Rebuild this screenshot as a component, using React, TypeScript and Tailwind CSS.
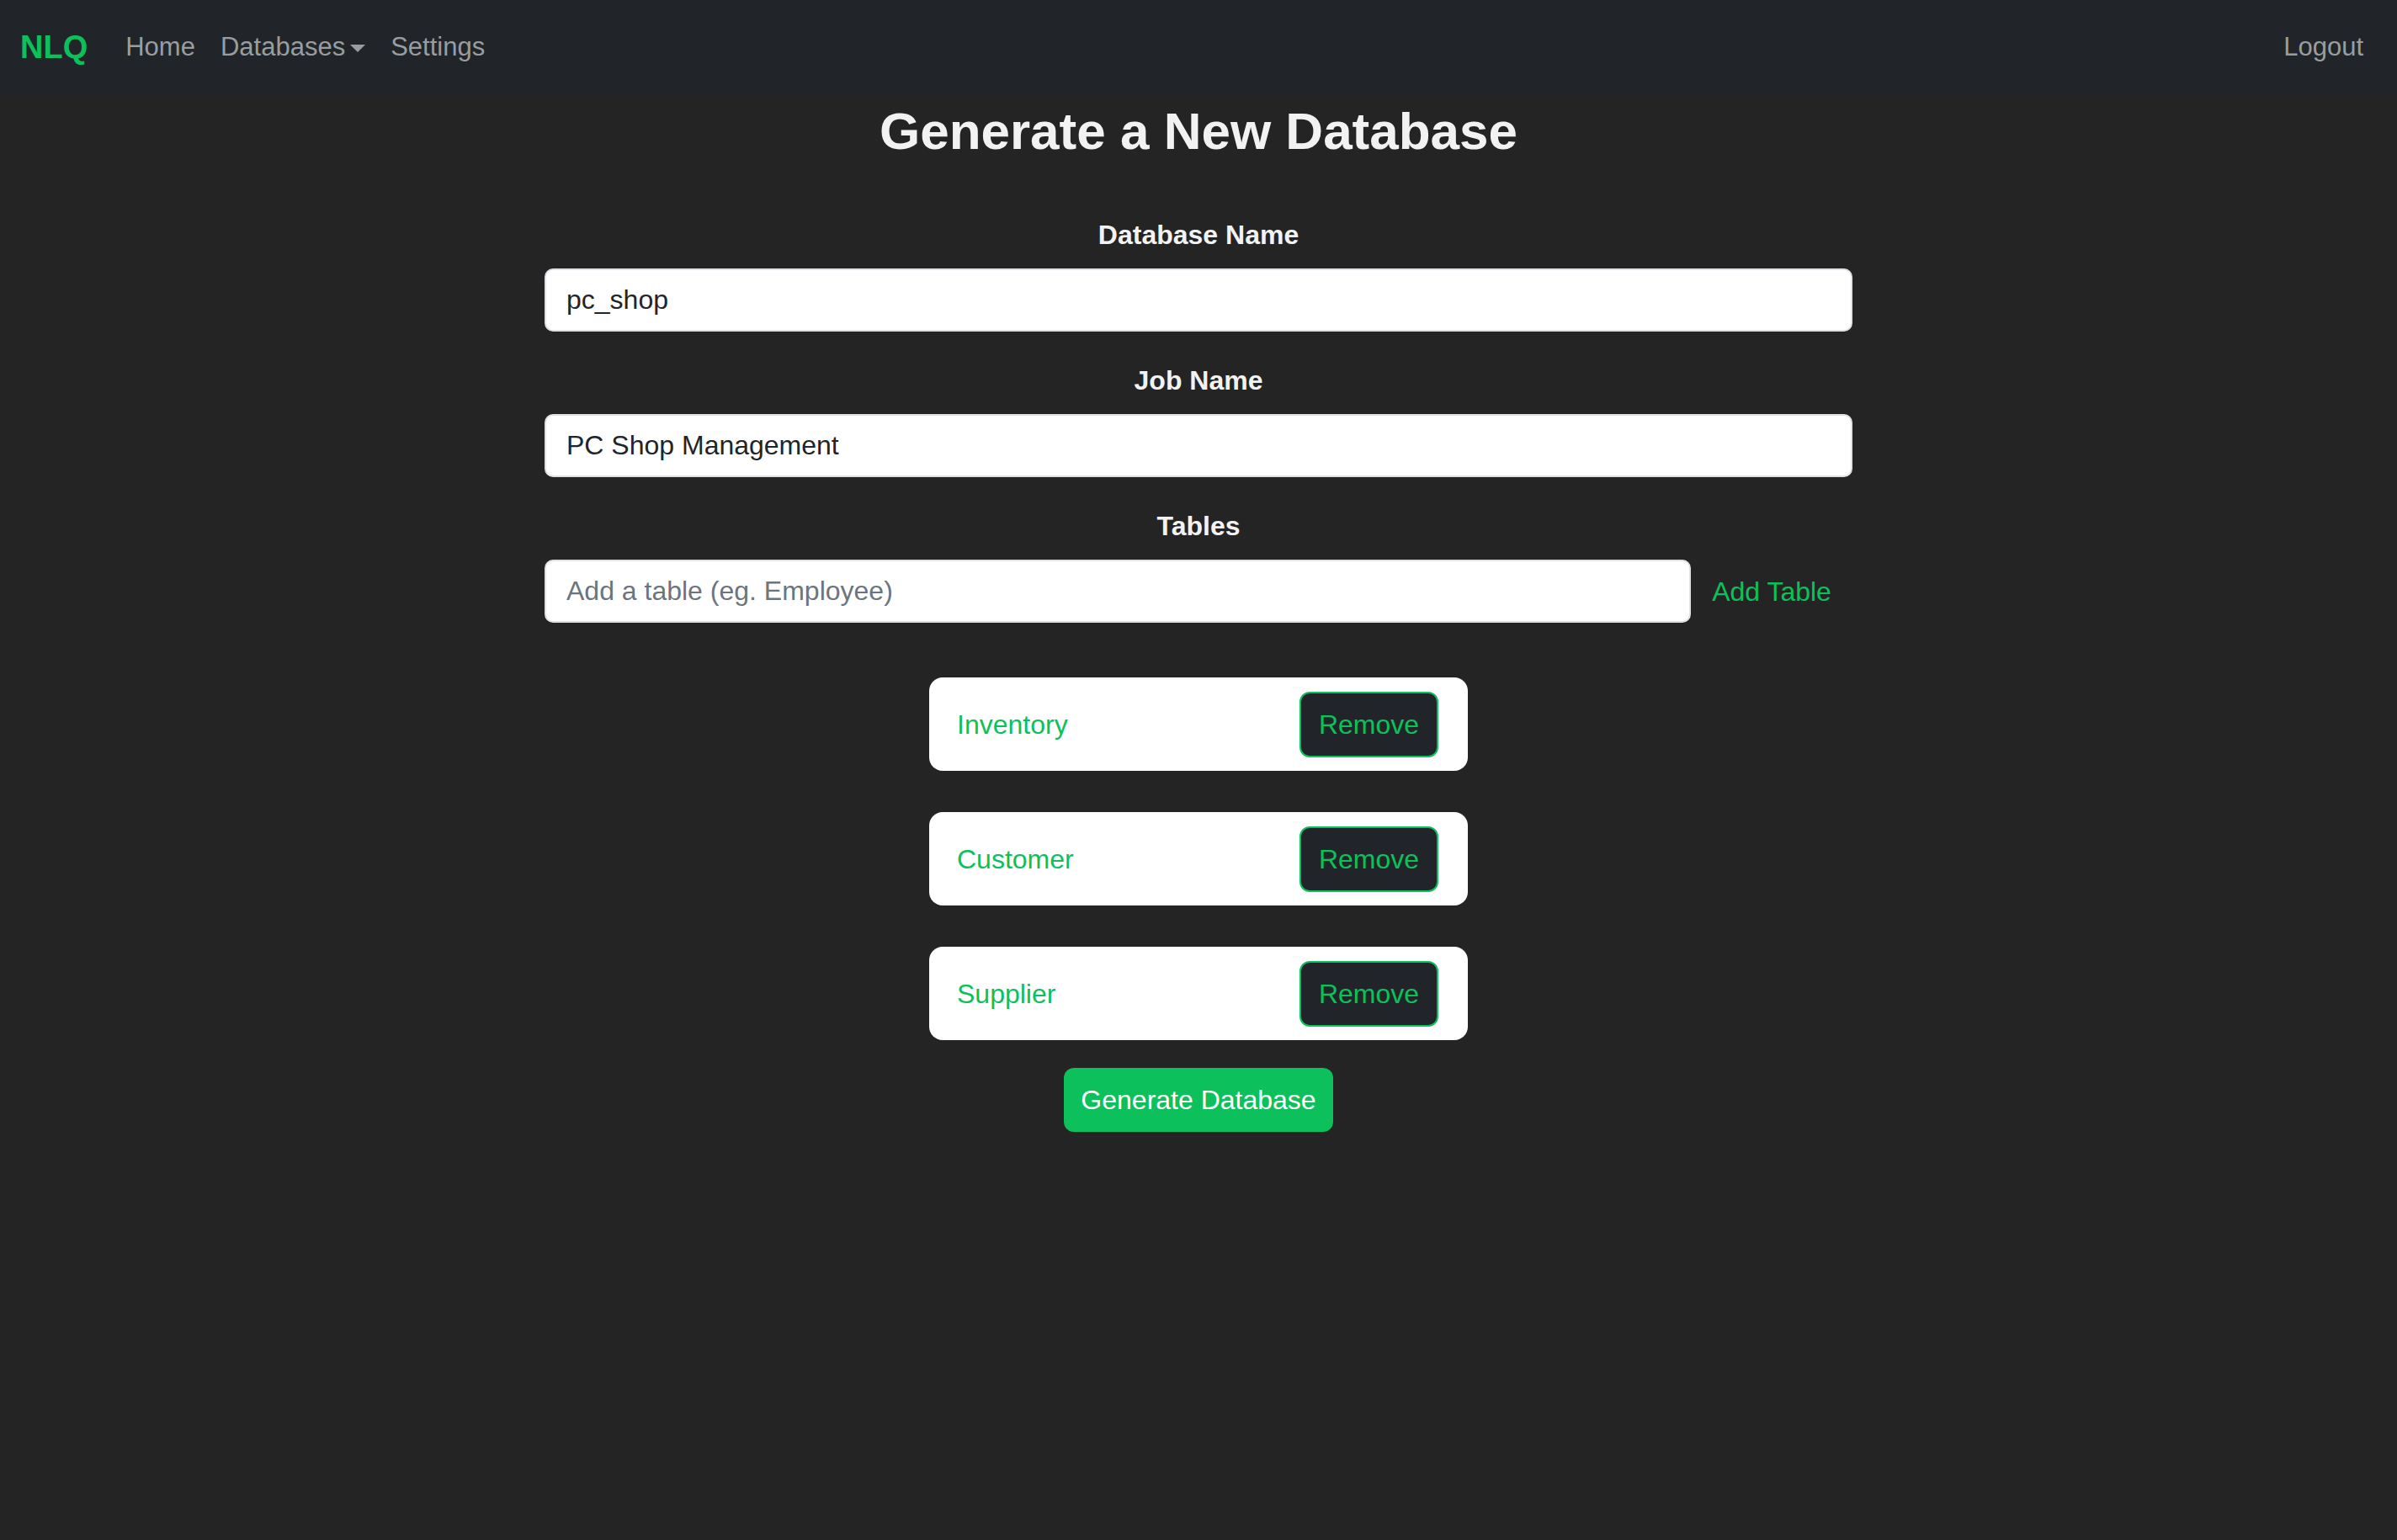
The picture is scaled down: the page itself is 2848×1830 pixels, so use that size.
import { useState } from "react";

const FONT = { fontFamily: '"Segoe UI", "Liberation Sans", Arial, sans-serif' };

export default function App() {
  const [tables, setTables] = useState(["Inventory", "Customer", "Supplier"]);
  const [newTable, setNewTable] = useState("");

  return (
    <div className="min-h-[1830px] bg-[#242424] text-[32px]" style={FONT}>
      {/* navbar */}
      <nav className="flex h-[113px] items-center justify-between bg-[#212529] px-[24px]">
        <div className="flex items-center">
          <span className="mr-[30px] text-[38px] font-bold text-[#0cc15b]">NLQ</span>
          <a className="px-[15px] text-[31px] text-[#9a9da0]">Home</a>
          <a className="flex items-center px-[15px] text-[31px] text-[#9a9da0]">
            Databases
            <span className="ml-[6px] mt-[2px] h-0 w-0 border-x-[9px] border-t-[9px] border-x-transparent border-t-[#9a9da0]" />
          </a>
          <a className="px-[15px] text-[31px] text-[#9a9da0]">Settings</a>
        </div>
        <a className="px-[16px] text-[31px] text-[#9a9da0]">Logout</a>
      </nav>

      <main className="flex flex-col items-center">
        <h1 className="mt-[4px] text-[62px] leading-[77px] font-semibold text-[#f2f2f2]">
          Generate a New Database
        </h1>

        <div className="mt-[61px] flex w-[1554px] flex-col">
          <label className="mb-[16px] text-center leading-[48px] font-bold text-[#f2f2f2]">Database Name</label>
          <input
            defaultValue="pc_shop"
            className="h-[75px] rounded-[10px] border-2 border-[#dee2e6] bg-white px-[24px] text-[#212529] outline-none"
          />

          <label className="mb-[16px] mt-[34px] text-center leading-[48px] font-bold text-[#f2f2f2]">Job Name</label>
          <input
            defaultValue="PC Shop Management"
            className="h-[75px] rounded-[10px] border-2 border-[#dee2e6] bg-white px-[24px] text-[#212529] outline-none"
          />

          <label className="mb-[16px] mt-[34px] text-center leading-[48px] font-bold text-[#f2f2f2]">Tables</label>
          <div className="flex items-center">
            <input
              value={newTable}
              onChange={(e) => setNewTable(e.target.value)}
              placeholder="Add a table (eg. Employee)"
              className="h-[75px] flex-1 rounded-[10px] border-2 border-[#dee2e6] bg-white px-[24px] text-[#212529] outline-none placeholder:text-[#6c757d]"
            />
            <button
              className="h-[75px] w-[192px] text-[#0cc15b]"
              onClick={() => {
                if (newTable.trim()) {
                  setTables([...tables, newTable.trim()]);
                  setNewTable("");
                }
              }}
            >
              Add Table
            </button>
          </div>
        </div>

        {/* table list */}
        <ul className="mt-[65px] flex flex-col gap-[49px]">
          {tables.map((t, i) => (
            <li
              key={i}
              className="flex h-[111px] w-[640px] items-center justify-between rounded-[16px] bg-white pl-[33px] pr-[35px]"
            >
              <span className="text-[#0cc15b]">{t}</span>
              <button
                className="h-[78px] w-[165px] rounded-[12px] border-2 border-[#0cc15b] bg-[#212529] text-[#0cc15b]"
                onClick={() => setTables(tables.filter((_, j) => j !== i))}
              >
                Remove
              </button>
            </li>
          ))}
        </ul>

        <button className="mt-[33px] h-[76px] w-[320px] rounded-[12px] bg-[#0cc15b] text-white">
          Generate Database
        </button>
      </main>
    </div>
  );
}
